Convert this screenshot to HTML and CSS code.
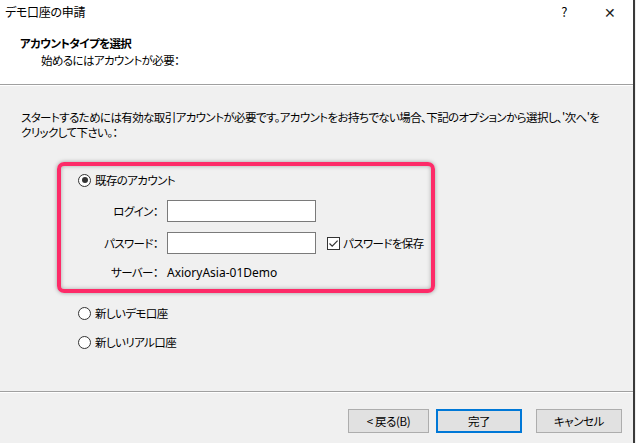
FILE: index.html
```html
<!DOCTYPE html>
<html lang="ja">
<head>
  <meta charset="UTF-8" />
  <title>デモ口座の申請</title>
  <link rel="stylesheet" href="styles.css">
</head>
<body>

  <div class="dialog">
    <div class="titlebar">
      <span class="title">デモ口座の申請</span>
      <span class="tb-btn">?</span>
      <span class="tb-btn close">&#x2715;</span>
    </div>

    <div class="header">
      <h1>アカウントタイプを選択</h1>
      <p>始めるにはアカウントが必要：</p>
    </div>

    <div class="content">
      <p class="intro">スタートするためには有効な取引アカウントが必要です。アカウントをお持ちでない場合、下記のオプションから選択し、'次へ'を<br>クリックして下さい。：</p>

      <!-- 既存アカウントの枠 -->
      <div class="highlight">
        <label class="radio-row">
          <span class="radio checked"></span>既存のアカウント
        </label>
        <div class="login-grid">
          <span class="lbl">ログイン：</span>
          <span class="field"></span>
          <span></span>

          <span class="lbl">パスワード：</span>
          <span class="field"></span>
          <label class="check-row">
            <span class="checkbox">
              <svg width="11" height="11" viewBox="0 0 11 11"><path d="M1.5 5.5 L4.2 8.2 L9.6 2.6" fill="none" stroke="#333" stroke-width="1.2"/></svg>
            </span>パスワードを保存
          </label>

          <span class="lbl">サーバー：</span>
          <span class="server">AxioryAsia-01Demo</span>
          <span></span>
        </div>
      </div>

      <label class="radio-row opt">
        <span class="radio"></span>新しいデモ口座
      </label>
      <label class="radio-row opt second">
        <span class="radio"></span>新しいリアル口座
      </label>
    </div>

    <div class="footer">
      <button class="btn back">&lt; 戻る(B)</button>
      <button class="btn finish">完了</button>
      <button class="btn cancel">キャンセル</button>
    </div>
  </div>

</body>
</html>
```

FILE: styles.css
```css
* { box-sizing: border-box; margin: 0; padding: 0; }
body {
  font-family: "Noto Sans CJK JP", "Noto Sans", sans-serif;
  font-size: 11.5px;
  font-feature-settings: "palt";
  letter-spacing: -0.6px;
  color: #000;
  background: #f0f0f0;
  width: 636px;
  height: 443px;
  overflow: hidden;
  white-space: nowrap;
}
.dialog {
  display: flex;
  flex-direction: column;
  width: 635px;
  height: 443px;
  background: #f0f0f0;
  border-right: 2px solid #3a3a3a;
}

/* タイトルバー */
.titlebar {
  display: flex;
  align-items: center;
  height: 30px;
  padding: 0 0 6px 5px;
  background: #fff;
}
.titlebar .title {
  flex: 1;
  font-size: 12px;
  letter-spacing: -0.3px;
  line-height: 16px;
}
.tb-btn {
  width: 46px;
  text-align: center;
  font-size: 13px;
  line-height: 16px;
}
.tb-btn.close {
  font-size: 14px;
  color: #222;
}

/* ヘッダー */
.header {
  height: 55px;
  padding: 6px 0 0 20px;
  background: #fff;
  border-bottom: 1px solid #a0a0a0;
  box-shadow: 0 1px 0 #fff;
}
.header h1 {
  font-size: 11.5px;
  font-weight: bold;
  line-height: 14px;
}
.header p {
  margin-top: 3px;
  padding-left: 21px;
  line-height: 14px;
}

/* 本文 */
.content {
  flex: 1;
  padding: 25px 0 0 21px;
  border-bottom: 1px solid #a0a0a0;
  box-shadow: 0 1px 0 #fff;
}
.intro {
  line-height: 15px;
}
.highlight {
  width: 378px;
  margin: 22px 0 0 36px;
  padding: 6px 0 9px 17px;
  border: 4px solid #fd2b68;
  border-radius: 7px;
  box-shadow: 0 0 4px rgba(0,0,0,0.35), inset 0 0 4px rgba(0,0,0,0.3);
}
.radio-row {
  display: flex;
  align-items: center;
  gap: 4px;
  height: 16px;
  line-height: 16px;
}
.radio {
  position: relative;
  width: 13px;
  height: 13px;
  border: 1px solid #333;
  border-radius: 50%;
  background: #fff;
}
.radio.checked::after {
  content: "";
  position: absolute;
  top: 2.5px;
  left: 2.5px;
  width: 6px;
  height: 6px;
  border-radius: 50%;
  background: #333;
}
.login-grid {
  display: grid;
  grid-template-columns: 80px 149px auto;
  grid-template-rows: 22px 22px 16px;
  column-gap: 9px;
  row-gap: 10px;
  align-items: center;
  margin-top: 12px;
}
.lbl {
  text-align: right;
}
.field {
  height: 22px;
  background: #fff;
  border: 1px solid #7a7a7a;
}
.server {
  font-family: "Noto Sans", sans-serif;
  font-size: 12px;
  letter-spacing: 0;
}
.check-row {
  display: flex;
  align-items: center;
  gap: 3px;
  margin-left: 2px;
}
.checkbox {
  display: flex;
  align-items: center;
  justify-content: center;
  width: 13px;
  height: 13px;
  border: 1px solid #333;
  background: #fff;
}
.opt {
  margin: 12px 0 0 57px;
}
.opt.second {
  margin-top: 13px;
}

/* ボタン */
.footer {
  display: flex;
  justify-content: flex-end;
  align-items: flex-start;
  height: 51px;
  padding: 17px 11px 0 0;
}
.btn {
  height: 24px;
  font-family: inherit;
  font-size: 11.5px;
  font-feature-settings: "palt";
  letter-spacing: -0.4px;
  color: #000;
  background: #e1e1e1;
  border: 1px solid #adadad;
}
.btn.back { width: 81px; }
.btn.finish {
  width: 86px;
  margin-left: 7px;
  border: 2px solid #0078d7;
}
.btn.cancel {
  width: 86px;
  margin-left: 14px;
}
```
